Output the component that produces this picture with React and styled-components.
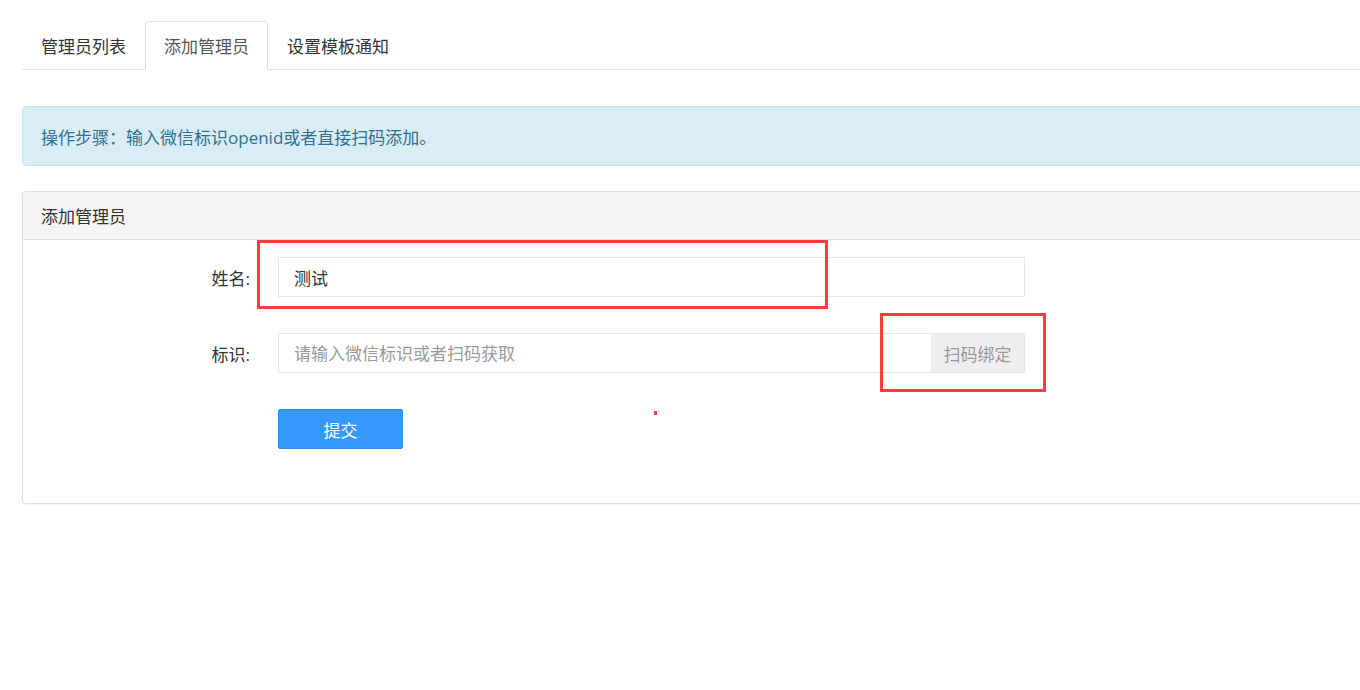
import styled, { createGlobalStyle } from 'styled-components';

const GlobalStyle = createGlobalStyle`
  html, body {
    margin: 0;
    padding: 0;
    background: #ffffff;
    overflow: hidden;
  }
  body {
    font-family: "Open Sans", "Noto Sans CJK SC", sans-serif;
    font-size: 17px;
    color: #333333;
  }
`;

const Page = styled.div`
  position: relative;
  width: 1420px;
  height: 690px;
  padding: 21px 0 0 22px;
  box-sizing: border-box;
`;

const TabBar = styled.ul`
  display: flex;
  list-style: none;
  margin: 0;
  padding: 0;
  border-bottom: 1px solid #dddddd;
`;

const Tab = styled.li`
  height: 47px;
  line-height: 49px;
  padding: 0 18px;
  margin-bottom: -1px;
  border: 1px solid ${(p) => (p.$active ? '#dddddd' : 'transparent')};
  border-bottom-color: ${(p) => (p.$active ? '#ffffff' : 'transparent')};
  border-radius: 4px 4px 0 0;
  background: ${(p) => (p.$active ? '#ffffff' : 'transparent')};
  color: ${(p) => (p.$active ? '#555555' : '#333333')};
  cursor: pointer;
  white-space: nowrap;
`;

const Alert = styled.div`
  margin-top: 36px;
  height: 58px;
  display: flex;
  align-items: center;
  padding: 0 18px;
  background: #d9edf7;
  border: 1px solid #bce8f1;
  border-radius: 4px;
  color: #31708f;
`;

const Panel = styled.div`
  margin-top: 25px;
  border: 1px solid #dddddd;
  border-radius: 4px;
  box-shadow: 0 1px 1px rgba(0, 0, 0, 0.05);
`;

const PanelHeading = styled.div`
  height: 47px;
  display: flex;
  align-items: center;
  padding: 0 18px;
  background: #f4f4f4;
  border-bottom: 1px solid #dddddd;
  border-radius: 3px 3px 0 0;
  color: #333333;
`;

const PanelBody = styled.div`
  padding: 17px 0 54px;
  display: flex;
  flex-direction: column;
  gap: 36px;
`;

const FormRow = styled.div`
  display: flex;
  align-items: center;
`;

const Label = styled.label`
  width: 241px;
  padding-right: 14px;
  box-sizing: border-box;
  text-align: right;
  color: #333333;
  white-space: nowrap;
`;

const Field = styled.div`
  display: flex;
  width: 747px;
  height: 40px;
  margin-left: 14px;
  border: 1px solid #e6e6e6;
  box-sizing: border-box;
  background: #ffffff;
`;

const Input = styled.input`
  flex: 1;
  min-width: 0;
  border: none;
  outline: none;
  padding: 0 15px;
  font: inherit;
  color: #333333;
  background: transparent;

  &::placeholder {
    color: #999999;
  }
`;

const Addon = styled.span`
  width: 93px;
  display: flex;
  align-items: center;
  justify-content: center;
  background: #eeeeee;
  color: #999999;
  white-space: nowrap;
`;

const SubmitButton = styled.button`
  width: 125px;
  height: 40px;
  margin-left: 255px;
  border: 1px solid #2d8cf0;
  border-radius: 2px;
  background: #3399ff;
  color: #ffffff;
  font: inherit;
  cursor: pointer;
`;

const Mark = styled.div`
  position: absolute;
  left: ${(p) => p.$x}px;
  top: ${(p) => p.$y}px;
  width: ${(p) => p.$w}px;
  height: ${(p) => p.$h}px;
  border: 3px solid #ff3b3b;
  box-sizing: border-box;
  pointer-events: none;
`;

const Dot = styled.div`
  position: absolute;
  left: 654px;
  top: 411px;
  width: 3px;
  height: 4px;
  background: #ff3b3b;
`;

export default function App() {
  return (
    <>
      <GlobalStyle />
      <Page>
        <TabBar>
          <Tab>管理员列表</Tab>
          <Tab $active>添加管理员</Tab>
          <Tab>设置模板通知</Tab>
        </TabBar>

        <Alert>操作步骤：输入微信标识openid或者直接扫码添加。</Alert>

        <Panel>
          <PanelHeading>添加管理员</PanelHeading>
          <PanelBody>
            <FormRow>
              <Label>姓名:</Label>
              <Field>
                <Input defaultValue="测试" />
              </Field>
            </FormRow>
            <FormRow>
              <Label>标识:</Label>
              <Field>
                <Input placeholder="请输入微信标识或者扫码获取" />
                <Addon>扫码绑定</Addon>
              </Field>
            </FormRow>
            <FormRow>
              <SubmitButton type="button">提交</SubmitButton>
            </FormRow>
          </PanelBody>
        </Panel>

        <Mark $x={257} $y={240} $w={571} $h={69} />
        <Mark $x={880} $y={313} $w={166} $h={79} />
        <Dot />
      </Page>
    </>
  );
}
